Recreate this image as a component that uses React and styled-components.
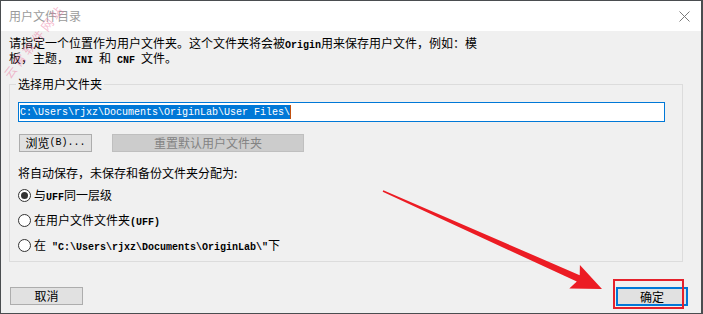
import React from "react";
import styled, { createGlobalStyle } from "styled-components";

const Global = createGlobalStyle`
  html, body { margin: 0; padding: 0; background: #f0f0f0; }
  * { box-sizing: border-box; }
`;

const Window = styled.div`
  position: relative;
  width: 703px;
  height: 314px;
  display: flex;
  flex-direction: column;
  border: 1px solid #4a4d50;
  border-right-width: 2px;
  font-family: "Noto Sans CJK SC", "Noto Sans", sans-serif;
  font-size: 12px;
  color: #000;
  overflow: hidden;
`;

const TitleBar = styled.div`
  height: 30px;
  flex: none;
  background: #fff;
  display: flex;
  align-items: center;
  justify-content: space-between;
  padding: 0 10px 0 8px;
`;

const Title = styled.span`
  color: #9b9b9b;
  font-size: 12px;
  line-height: 14px;
`;

const Close = styled.svg`
  width: 11px;
  height: 11px;
  margin-right: 1px;
`;

const Body = styled.div`
  flex: 1;
  min-height: 0;
  background: #f0f0f0;
  display: flex;
  flex-direction: column;
  padding: 5px 0 0 8px;
`;

const Intro = styled.p`
  margin: 0;
  line-height: 14px;
  height: 28px;
  width: 480px;
`;

const Mono = styled.span`
  font-family: "Liberation Mono", monospace;
  font-size: 10px;
  line-height: 10px;
  white-space: pre;
  font-weight: ${(p) => (p.$bold ? 700 : 400)};
`;

const Group = styled.fieldset`
  margin: 13px 0 0 0;
  width: 674px;
  border: 1px solid #dcdcdc;
  padding: 0 8px 6px 8px;
  display: flex;
  flex-direction: column;
`;

const Legend = styled.legend`
  padding: 0 2px;
  margin-left: -2px;
  line-height: 14px;
  height: 14px;
`;

const PathField = styled.div`
  margin-top: 11px;
  width: 647px;
  height: 20px;
  background: #fff;
  border: 1px solid #0078d7;
  display: flex;
  align-items: center;
  padding-left: 1px;
`;

const Selected = styled.span`
  background: #0078d7;
  color: #fff;
  height: 14px;
  display: inline-flex;
  align-items: center;
  font-family: "Liberation Mono", monospace;
  font-size: 10px;
`;

const Caret = styled.span`
  width: 1px;
  height: 14px;
  background: #c05010;
`;

const ButtonRow = styled.div`
  margin-top: 12px;
  display: flex;
  gap: 20px;
  padding-left: 1px;
`;

const Button = styled.div`
  width: ${(p) => p.$w}px;
  height: ${(p) => p.$h || 18}px;
  display: flex;
  align-items: center;
  justify-content: center;
  line-height: 14px;
  background: ${(p) => (p.$disabled ? "#cccccc" : "#e1e1e1")};
  border: 1px solid ${(p) => (p.$primary ? "#0078d7" : p.$disabled ? "#bfbfbf" : "#adadad")};
  box-shadow: ${(p) => (p.$primary ? "inset 0 0 0 1px #0078d7" : "none")};
  color: ${(p) => (p.$disabled ? "#838383" : "#000")};
`;

const Label = styled.div`
  margin-top: 14px;
  line-height: 14px;
  height: 14px;
`;

const Radios = styled.div`
  margin-top: 5px;
  display: flex;
  flex-direction: column;
  gap: 5px;
`;

const RadioRow = styled.div`
  height: 20px;
  display: flex;
  align-items: center;
  gap: 3px;
  line-height: 14px;
`;

const RadioCircle = styled.span`
  width: 13px;
  height: 13px;
  border-radius: 50%;
  border: 1px solid #333;
  background: #fff;
  display: flex;
  align-items: center;
  justify-content: center;
  &::after {
    content: "";
    width: 7px;
    height: 7px;
    border-radius: 50%;
    background: ${(p) => (p.$checked ? "#333" : "transparent")};
  }
`;

const Footer = styled.div`
  margin-top: 25px;
  margin-right: 13px;
  padding-left: 1px;
  display: flex;
  justify-content: space-between;
  align-items: flex-start;
`;

const Highlight = styled.div`
  position: absolute;
  left: 612px;
  top: 278px;
  width: 71px;
  height: 30px;
  border: 2px solid #e5212b;
  pointer-events: none;
`;

const Overlay = styled.svg`
  position: absolute;
  left: -1px;
  top: -1px;
  width: 703px;
  height: 314px;
  pointer-events: none;
`;

const Watermark = styled.div`
  position: absolute;
  left: -12px;
  top: 33px;
  transform: rotate(-52deg);
  transform-origin: center;
  font-size: 12px;
  line-height: 14px;
  color: rgba(236, 120, 160, 0.5);
  letter-spacing: 3px;
  white-space: nowrap;
  pointer-events: none;
`;

function Arrow() {
  const sx = 383, sy = 191, tx = 602, ty = 289;
  const dx = tx - sx, dy = ty - sy;
  const L = Math.hypot(dx, dy);
  const ux = dx / L, uy = dy / L;
  const nx = -uy, ny = ux;
  const headLen = 30, headW = 13, neckW = 3.5, startW = 0.8;
  const bx = tx - headLen * ux, by = ty - headLen * uy;
  const nkx = bx + 4 * ux, nky = by + 4 * uy;
  const pts = [
    [sx + startW * nx, sy + startW * ny],
    [nkx + neckW * nx, nky + neckW * ny],
    [bx + headW * nx, by + headW * ny],
    [tx, ty],
    [bx - headW * nx, by - headW * ny],
    [nkx - neckW * nx, nky - neckW * ny],
    [sx - startW * nx, sy - startW * ny],
  ]
    .map((p) => p.map((v) => v.toFixed(1)).join(","))
    .join(" ");
  return <polygon points={pts} fill="#ec1c24" />;
}

export default function App() {
  return (
    <>
      <Global />
      <Window>
        <TitleBar>
          <Title>用户文件目录</Title>
          <Close viewBox="0 0 11 11">
            <path d="M0.5 0.5 L10.5 10.5 M10.5 0.5 L0.5 10.5" stroke="#7a7a7a" strokeWidth="1" />
          </Close>
        </TitleBar>
        <Body>
          <Intro>
            请指定一个位置作为用户文件夹。这个文件夹将会被<Mono $bold>Origin</Mono>用来保存用户文件，例如：模板，主题，<Mono $bold> INI </Mono>和<Mono $bold> CNF </Mono>文件。
          </Intro>
          <Group>
            <Legend>选择用户文件夹</Legend>
            <PathField>
              <Selected>C:\Users\rjxz\Documents\OriginLab\User Files\</Selected>
              <Caret />
            </PathField>
            <ButtonRow>
              <Button $w={73}>
                浏览<Mono>(B)...</Mono>
              </Button>
              <Button $w={192} $disabled>
                重置默认用户文件夹
              </Button>
            </ButtonRow>
            <Label>将自动保存，未保存和备份文件夹分配为:</Label>
            <Radios>
              <RadioRow>
                <RadioCircle $checked />
                <span>
                  与<Mono $bold>UFF</Mono>同一层级
                </span>
              </RadioRow>
              <RadioRow>
                <RadioCircle />
                <span>
                  在用户文件文件夹<Mono $bold>(UFF)</Mono>
                </span>
              </RadioRow>
              <RadioRow>
                <RadioCircle />
                <span>
                  在<Mono $bold> "C:\Users\rjxz\Documents\OriginLab\"</Mono>下
                </span>
              </RadioRow>
            </Radios>
          </Group>
          <Footer>
            <Button $w={73}>取消</Button>
            <Button $w={72} $h={19} $primary>
              确定
            </Button>
          </Footer>
        </Body>
        <Watermark>云霄软件网站</Watermark>
        <Overlay viewBox="0 0 703 314">
          <Arrow />
        </Overlay>
        <Highlight />
      </Window>
    </>
  );
}
